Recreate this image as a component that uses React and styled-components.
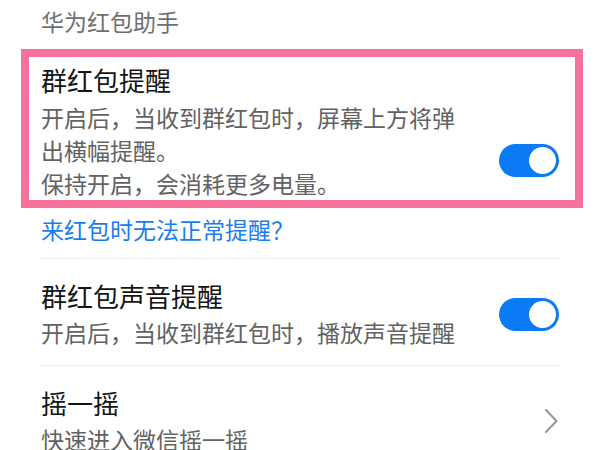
import React from 'react'
import styled, { createGlobalStyle } from 'styled-components'

const GlobalStyle = createGlobalStyle`
  body {
    margin: 0;
    background: #ffffff;
    font-family: "Noto Sans CJK SC", "Noto Sans", sans-serif;
  }
`

const Page = styled.div`
  width: 600px;
  height: 450px;
  overflow: hidden;
  background: #ffffff;
`

const SectionHeader = styled.div`
  height: 49px;
  box-sizing: border-box;
  padding: 3px 41px 0;
  font-size: 23px;
  line-height: 36px;
  color: #6f6f6f;
`

const Highlight = styled.div`
  margin: 0 17px 0 21px;
  border: 8px solid #f6729a;
  padding: 6px 16px 0 12px;
  display: flex;
  justify-content: space-between;
`

const TextBlock = styled.div`
  display: flex;
  flex-direction: column;
  max-width: ${(p) => p.$maxWidth || 'none'};
`

const Title = styled.div`
  font-size: 26px;
  line-height: ${(p) => p.$lh || '32px'};
  color: #141414;
`

const Desc = styled.div`
  font-size: 23px;
  line-height: ${(p) => p.$lh || '32px'};
  color: #626262;
  margin-top: ${(p) => p.$gap || '4px'};
`

const Toggle = styled.div`
  width: 60px;
  height: 33px;
  flex-shrink: 0;
  box-sizing: border-box;
  border-radius: 17px;
  background: #0a7bf5;
  padding: 3px 3px 3px 0;
  display: flex;
  justify-content: flex-end;
  align-self: ${(p) => p.$align || 'center'};
  margin-bottom: ${(p) => p.$bottom || '0'};
`

const Knob = styled.div`
  width: 27px;
  height: 27px;
  border-radius: 50%;
  background: #ffffff;
`

const HelpLink = styled.div`
  padding: 0 41px;
  margin-bottom: 7px;
  font-size: 23px;
  line-height: 43px;
  color: #1a7cf2;
`

const List = styled.div`
  margin: 0 40px;
`

const Row = styled.div`
  border-top: 1px solid #ececec;
  padding: 21px 1px 17px 1px;
  display: flex;
  align-items: center;
  justify-content: space-between;
`

const Chevron = () => (
  <svg width="16" height="26" viewBox="0 0 16 26" fill="none">
    <polyline points="3,2 13.5,13 3,24" stroke="#9a9a9a" strokeWidth="2.2" strokeLinecap="round" strokeLinejoin="round" />
  </svg>
)

const App = () => {
  return (
    <Page>
      <GlobalStyle />
      <SectionHeader>华为红包助手</SectionHeader>
      <Highlight>
        <TextBlock $maxWidth="425px">
          <Title $lh="33px">群红包提醒</Title>
          <Desc $lh="33px" $gap="5px">开启后，当收到群红包时，屏幕上方将弹出横幅提醒。</Desc>
          <Desc $lh="33px" $gap="0">保持开启，会消耗更多电量。</Desc>
        </TextBlock>
        <Toggle $align="flex-end" $bottom="23px">
          <Knob />
        </Toggle>
      </Highlight>
      <HelpLink>来红包时无法正常提醒？</HelpLink>
      <List>
        <Row>
          <TextBlock>
            <Title>群红包声音提醒</Title>
            <Desc>开启后，当收到群红包时，播放声音提醒</Desc>
          </TextBlock>
          <Toggle>
            <Knob />
          </Toggle>
        </Row>
        <Row>
          <TextBlock>
            <Title>摇一摇</Title>
            <Desc>快速进入微信摇一摇</Desc>
          </TextBlock>
          <Chevron />
        </Row>
      </List>
    </Page>
  )
}

export default App
